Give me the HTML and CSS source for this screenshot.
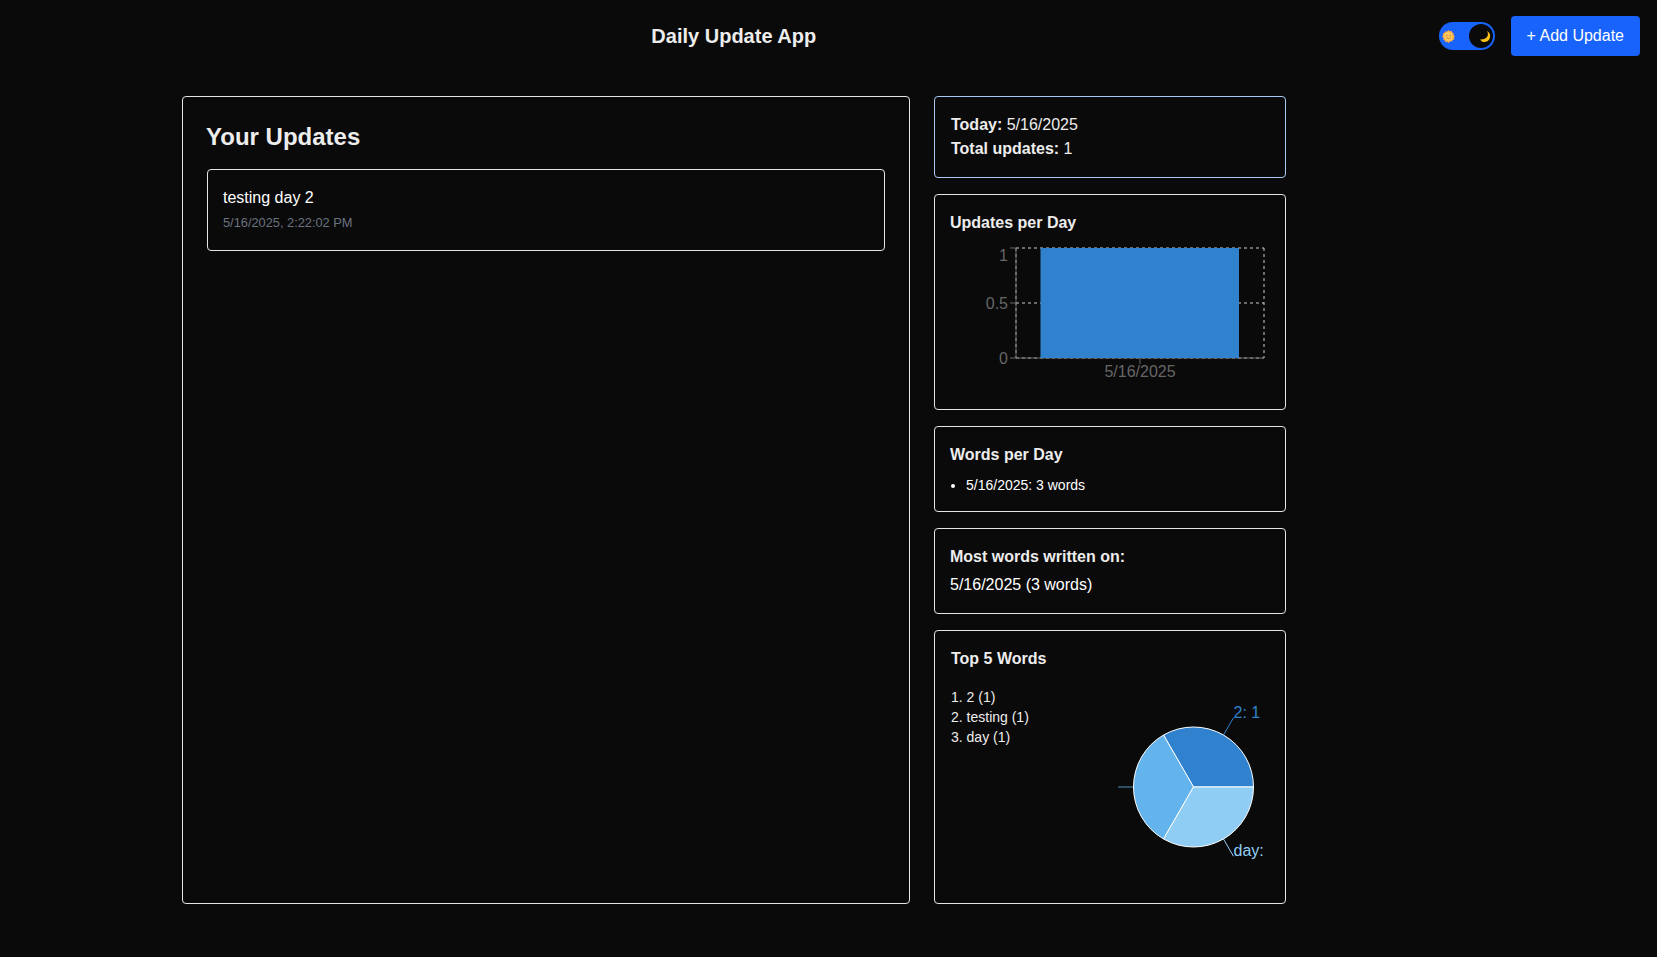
FILE: index.html
```html
<!DOCTYPE html>
<html>
<head>
  <title>Daily Update App</title>
  <link rel="stylesheet" href="styles.css">
</head>
<body>
  <header class="topbar">
    <h1 class="app-title">Daily Update App</h1>
    <div class="topbar-actions">
      <div class="theme-toggle">
        <svg class="sun" width="13" height="13" viewBox="0 0 13 13">
          <path d="M6.500 0l1.300 1.200 1.700-.5.600 1.700 1.700.6-.5 1.700L13 6.500l-1.200 1.300.5 1.700-1.700.6-.6 1.700-1.700-.5L6.500 13l-1.300-1.200-1.700.5-.6-1.700-1.700-.6.5-1.700L0 6.500l1.200-1.300-.5-1.700 1.700-.6.6-1.700 1.700.5z" fill="#fba94c"/>
          <circle cx="6.500" cy="6.500" r="4.500" fill="#fec75e"/>
          <circle cx="4.900" cy="5.700" r=".6" fill="#b5741f"/>
          <circle cx="8.100" cy="5.700" r=".6" fill="#b5741f"/>
          <path d="M4.300 7.700q2.200 1.700 4.400 0" fill="none" stroke="#b5741f" stroke-width=".7"/>
        </svg>
        <div class="toggle-knob">
          <svg width="13" height="13" viewBox="0 0 13 13">
            <path d="M9 1C11.500 5 9 10 2 9.500C4 13 9.500 13 11.500 9C13 5.500 12 2.500 9 1Z" fill="#fcc21b"/>
          </svg>
        </div>
      </div>
      <button class="add-btn" type="button">+ Add Update</button>
    </div>
  </header>

  <main class="layout">
    <section class="updates-panel">
      <h2 class="panel-title">Your Updates</h2>
      <div class="update-item">
        <p class="update-text">testing day 2</p>
        <p class="update-time">5/16/2025, 2:22:02 PM</p>
      </div>
    </section>

    <aside class="sidebar">
      <div class="card card-stats">
        <p><strong>Today:</strong> 5/16/2025</p>
        <p><strong>Total updates:</strong> 1</p>
      </div>

      <div class="card card-tight">
        <h3 class="card-title">Updates per Day</h3>
        <svg class="bar-chart" width="320" height="150" viewBox="0 0 320 150">
          <path class="grid" d="M66 5H314M66 60H314M66 115H314M66 5V115M314 5V115"/>
          <path class="axis" d="M66 5V115M60 5H66M60 60H66M60 115H66M66 115H314M190 115V121"/>
          <rect x="90.500" y="5" width="198.500" height="110" fill="#3182ce"/>
          <text class="tick" x="58" y="18" text-anchor="end">1</text>
          <text class="tick" x="58" y="66" text-anchor="end">0.5</text>
          <text class="tick" x="58" y="121" text-anchor="end">0</text>
          <text class="tick" x="190" y="134" text-anchor="middle">5/16/2025</text>
        </svg>
      </div>

      <div class="card card-tight">
        <h3 class="card-title">Words per Day</h3>
        <ul class="word-list">
          <li>5/16/2025: 3 words</li>
        </ul>
      </div>

      <div class="card card-tight">
        <h3 class="card-title">Most words written on:</h3>
        <p class="most-words">5/16/2025 (3 words)</p>
      </div>

      <div class="card">
        <h3 class="card-title">Top 5 Words</h3>
        <div class="top-words">
          <ol class="top-list">
            <li>1. 2 (1)</li>
            <li>2. testing (1)</li>
            <li>3. day (1)</li>
          </ol>
          <svg class="pie-chart" width="150" height="200" viewBox="0 0 150 200">
            <path d="M105.500 48L115.500 30.700" stroke="#3182ce" fill="none"/>
            <path d="M15.500 100H0" stroke="#63b3ed" fill="none" opacity=".8"/>
            <path d="M105.500 152L115.500 169.300" stroke="#90cdf4" fill="none"/>
            <path d="M75.500 100H135.500A60 60 0 0 0 45.500 48.040Z" fill="#3182ce" stroke="#fff"/>
            <path d="M75.500 100L45.500 48.040A60 60 0 0 0 45.500 151.960Z" fill="#63b3ed" stroke="#fff"/>
            <path d="M75.500 100L45.500 151.960A60 60 0 0 0 135.500 100Z" fill="#90cdf4" stroke="#fff"/>
            <text x="115.500" y="31" fill="#3182ce" font-size="16">2: 1</text>
            <text x="115.500" y="169" fill="#90cdf4" font-size="16">day:</text>
          </svg>
        </div>
      </div>
    </aside>
  </main>
</body>
</html>
```

FILE: styles.css
```css
* {
  box-sizing: border-box;
}

body {
  margin: 0;
  background: #0a0a0a;
  color: #ededed;
  font: 16px/24px "Liberation Sans", Arial, sans-serif;
}

p, h1, h2, h3, ul, ol {
  margin: 0;
}

.topbar {
  display: flex;
  align-items: center;
  padding: 16px 17px 16px 29px;
}

.app-title {
  flex: 1;
  font-size: 20px;
  line-height: 28px;
  text-align: center;
}

.topbar-actions {
  display: flex;
  align-items: center;
  gap: 16px;
}

.theme-toggle {
  display: flex;
  align-items: center;
  justify-content: space-between;
  width: 56px;
  height: 28px;
  padding: 2px 2px 2px 3px;
  border-radius: 14px;
  background: #1763fb;
}

.toggle-knob {
  display: flex;
  align-items: center;
  justify-content: flex-end;
  width: 24px;
  height: 24px;
  padding-right: 2px;
  border-radius: 50%;
  background: #0a0a0a;
}

.add-btn {
  height: 40px;
  padding: 0 16px;
  border: none;
  border-radius: 4px;
  background: #1763fb;
  color: #fff;
  font: inherit;
}

.layout {
  display: grid;
  grid-template-columns: 728px 352px;
  gap: 24px;
  margin: 24px 0 0 182px;
}

.updates-panel {
  padding: 24px;
  border: 1px solid #e5e5e5;
  border-radius: 4px;
}

.panel-title {
  margin: 0 0 16px -1px;
  font-size: 24px;
  line-height: 32px;
}

.update-item {
  padding: 16px 16px 19px 15px;
  border: 1px solid #e5e5e5;
  border-radius: 4px;
}

.update-text {
  color: #fff;
}

.update-time {
  margin-top: 5px;
  color: #6b7280;
  font-size: 12.8px;
  line-height: 16px;
}

.sidebar {
  display: flex;
  flex-direction: column;
  gap: 16px;
}

.card {
  padding: 16px;
  border: 1px solid #e5e5e5;
  border-radius: 4px;
}

.card-tight {
  padding: 16px 15px;
}

.card-stats {
  border-color: #a9c9f5;
}

.card-title {
  font-size: 16px;
  line-height: 24px;
}

.bar-chart {
  display: block;
  margin-top: 8px;
}

.grid {
  fill: none;
  stroke: #ccc;
  stroke-dasharray: 3 3;
}

.axis {
  fill: none;
  stroke: #666;
}

.tick {
  fill: #666;
  font-size: 16px;
}

.word-list {
  margin-top: 8px;
  padding-left: 16px;
  color: #fff;
  font-size: 14px;
  line-height: 20px;
}

.most-words {
  margin-top: 4px;
  color: #fff;
}

.top-words {
  display: flex;
  justify-content: space-between;
  margin-top: 16px;
}

.top-list {
  list-style: none;
  padding: 0;
  font-size: 14px;
  line-height: 20px;
}

.pie-chart {
  display: block;
  margin-right: 1px;
}
```
